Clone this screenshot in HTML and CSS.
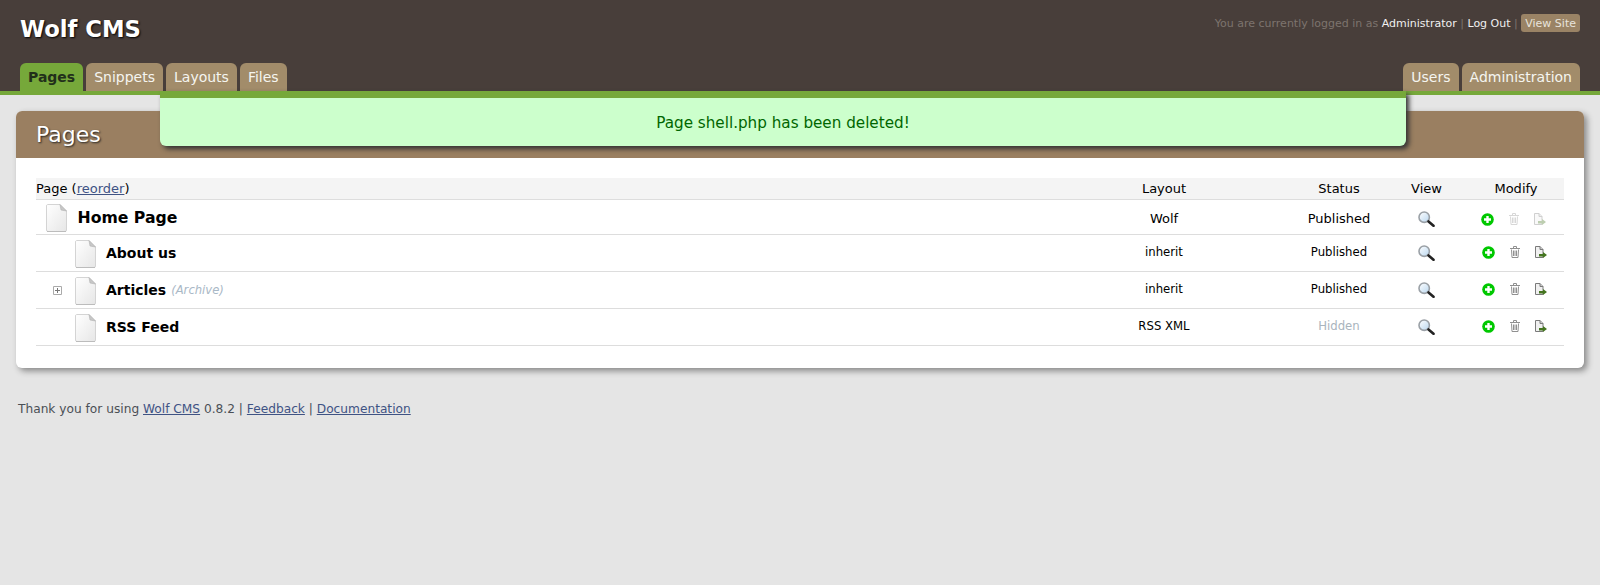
FILE: index.html
```html
<!DOCTYPE html>
<html lang="en">
<head>
  <meta charset="UTF-8">
  <title>Pages - Wolf CMS</title>
  <link rel="stylesheet" href="styles.css">
</head>
<body>
  <svg class="icon-defs" width="0" height="0">
    <defs>
      <linearGradient id="paper" x1="0" y1="0" x2="1" y2="1">
        <stop offset="0" stop-color="#ffffff"/>
        <stop offset="1" stop-color="#e6e6e6"/>
      </linearGradient>
      <linearGradient id="lens" x1="0" y1="0" x2="1" y2="1">
        <stop offset="0" stop-color="#ffffff"/>
        <stop offset="1" stop-color="#b9d7f0"/>
      </linearGradient>
    </defs>
    <symbol id="i-page" viewBox="0 0 22 28">
      <path d="M1.5 .5H14L20.5 7V26a1.5 1.5 0 0 1-1.5 1.5H2A1.5 1.5 0 0 1 .5 26V2A1.5 1.5 0 0 1 1.5 .5Z" fill="url(#paper)" stroke="#d4d4d4"/>
      <path d="M1 27.5H20" stroke="#bcbcbc"/>
      <path d="M14 .5L15 6L20.5 7Z" fill="#c8c8c8" stroke="#b0b0b0" stroke-width=".6"/>
    </symbol>
    <symbol id="i-add" viewBox="0 0 13 13">
      <circle cx="6.5" cy="6.5" r="6.3" fill="#00c800"/>
      <path d="M6.5 3V10M3 6.5H10" stroke="#fff" stroke-width="2.4"/>
    </symbol>
    <symbol id="i-trash" viewBox="0 0 12 12">
      <path d="M1 2.5H11M4.5 2.5V.5H7.5V2.5" fill="none" stroke="currentColor"/>
      <path d="M2.5 3.5L3 11.5H9L9.5 3.5M4.5 4.5V10M6 4.5V10M7.5 4.5V10" fill="none" stroke="currentColor"/>
    </symbol>
    <symbol id="i-move" viewBox="0 0 12 12">
      <path d="M.5 .5H5L8 3.5V11.5H.5Z" fill="#f0f0f0" stroke="#7a7a7a"/>
      <path d="M5 .5V3.5H8" fill="#ccc" stroke="#7a7a7a"/>
      <path d="M4 8H8V6L12 9L8 12V10.5H4Z" fill="#44751f"/>
    </symbol>
    <symbol id="i-view" viewBox="0 0 17 16">
      <circle cx="6.2" cy="6.2" r="5.2" fill="url(#lens)" stroke="#9aa0a6" stroke-width="1.6"/>
      <path d="M10.5 10.5L15.5 14.8" stroke="#222" stroke-width="2.6" stroke-linecap="round"/>
    </symbol>
    <symbol id="i-expand" viewBox="0 0 9 9">
      <path d="M.5 .5H8.5V8.5H.5Z" fill="none" stroke="#aaa"/>
      <path d="M2 4.5H7M4.5 2V7" stroke="#777"/>
    </symbol>
  </svg>

  <header class="site-header">
    <div class="header-top">
      <div class="logo">Wolf CMS</div>
      <div class="user-info">
        You are currently logged in as <a href="#">Administrator</a>
        <span class="sep">|</span> <a href="#">Log Out</a>
        <span class="sep">|</span> <a class="view-site" href="#">View Site</a>
      </div>
    </div>
    <nav class="tabs">
      <a class="tab current" href="#">Pages</a>
      <a class="tab" href="#">Snippets</a>
      <a class="tab" href="#">Layouts</a>
      <a class="tab" href="#">Files</a>
      <a class="tab push-right" href="#">Users</a>
      <a class="tab" href="#">Administration</a>
    </nav>
  </header>

  <div class="notice">Page shell.php has been deleted!</div>

  <main class="content">
    <h1 class="content-title">Pages</h1>
    <div class="content-body">
      <table class="page-list">
        <thead>
          <tr>
            <th class="col-page">Page (<a href="#">reorder</a>)</th>
            <th class="col-layout">Layout</th>
            <th class="col-status">Status</th>
            <th class="col-view">View</th>
            <th class="col-modify">Modify</th>
          </tr>
        </thead>
        <tbody>
          <tr class="row-home">
            <td>
              <div class="page-name">
                <svg class="ic-page"><use href="#i-page"/></svg>
                <strong>Home Page</strong>
              </div>
            </td>
            <td class="cell">Wolf</td>
            <td class="cell">Published</td>
            <td class="cell"><svg class="ic-view"><use href="#i-view"/></svg></td>
            <td>
              <div class="actions disabled-actions">
                <svg class="ic-small"><use href="#i-add"/></svg>
                <svg class="ic-small faded"><use href="#i-trash"/></svg>
                <svg class="ic-small faded"><use href="#i-move"/></svg>
              </div>
            </td>
          </tr>
          <tr>
            <td>
              <div class="page-name child">
                <svg class="ic-page"><use href="#i-page"/></svg>
                <strong>About us</strong>
              </div>
            </td>
            <td class="cell">inherit</td>
            <td class="cell">Published</td>
            <td class="cell"><svg class="ic-view"><use href="#i-view"/></svg></td>
            <td>
              <div class="actions">
                <svg class="ic-small"><use href="#i-add"/></svg>
                <svg class="ic-small"><use href="#i-trash"/></svg>
                <svg class="ic-small"><use href="#i-move"/></svg>
              </div>
            </td>
          </tr>
          <tr>
            <td>
              <div class="page-name child has-expand">
                <svg class="ic-expand"><use href="#i-expand"/></svg>
                <svg class="ic-page"><use href="#i-page"/></svg>
                <strong>Articles</strong>
                <em class="page-type">(Archive)</em>
              </div>
            </td>
            <td class="cell">inherit</td>
            <td class="cell">Published</td>
            <td class="cell"><svg class="ic-view"><use href="#i-view"/></svg></td>
            <td>
              <div class="actions">
                <svg class="ic-small"><use href="#i-add"/></svg>
                <svg class="ic-small"><use href="#i-trash"/></svg>
                <svg class="ic-small"><use href="#i-move"/></svg>
              </div>
            </td>
          </tr>
          <tr>
            <td>
              <div class="page-name child">
                <svg class="ic-page"><use href="#i-page"/></svg>
                <strong>RSS Feed</strong>
              </div>
            </td>
            <td class="cell">RSS XML</td>
            <td class="cell hidden-status">Hidden</td>
            <td class="cell"><svg class="ic-view"><use href="#i-view"/></svg></td>
            <td>
              <div class="actions">
                <svg class="ic-small"><use href="#i-add"/></svg>
                <svg class="ic-small"><use href="#i-trash"/></svg>
                <svg class="ic-small"><use href="#i-move"/></svg>
              </div>
            </td>
          </tr>
        </tbody>
      </table>
    </div>
  </main>

  <footer class="site-footer">
    Thank you for using <a href="#">Wolf CMS</a> 0.8.2 | <a href="#">Feedback</a> | <a href="#">Documentation</a>
  </footer>
</body>
</html>
```

FILE: styles.css
```css
body {
  margin: 0;
  background-color: #e5e5e5;
  font-family: "DejaVu Sans", sans-serif;
  font-size: 12px;
  color: #000;
}

.icon-defs {
  position: absolute;
}

/* header */
.site-header {
  height: 91px;
  background-color: #483e3a;
  border-bottom: 4px solid #76a83a;
  display: flex;
  flex-direction: column;
  justify-content: space-between;
  padding: 0 20px;
}

.header-top {
  display: flex;
  justify-content: space-between;
  align-items: flex-start;
}

.logo {
  margin-top: 15px;
  font-size: 22.7px;
  line-height: 29px;
  font-weight: bold;
  color: #fff;
  text-shadow: 1px 1px 2px #000;
}

.user-info {
  margin-top: 14px;
  font-size: 11px;
  line-height: 18px;
  color: #7d746e;
}

.user-info a {
  color: #f0f0f0;
  text-decoration: none;
}

.user-info .sep {
  color: #7d746e;
}

.user-info .view-site {
  display: inline-block;
  padding: 1px 4px 0;
  height: 17px;
  background-color: #9a8365;
  color: #e8e4dc;
  border-radius: 3px;
}

.tabs {
  display: flex;
  gap: 3px;
}

.tab {
  height: 28px;
  line-height: 28px;
  padding: 0 8px;
  background-color: #a28c6a;
  border-radius: 6px 6px 0 0;
  color: #f5f5f0;
  font-size: 14px;
  text-decoration: none;
}

.tab.current {
  background-color: #76a83a;
  color: #22301a;
  font-weight: bold;
}

.tab.push-right {
  margin-left: auto;
}

/* notice overlay */
.notice {
  position: absolute;
  left: 160px;
  top: 91px;
  width: 1246px;
  height: 48px;
  line-height: 50px;
  background-color: #cfc;
  border-top: 7px solid #76a83a;
  border-radius: 0 0 6px 6px;
  box-shadow: 3px 3px 5px #333;
  color: #060;
  font-size: 15.2px;
  text-align: center;
}

/* main box */
.content {
  margin: 16px 16px 0;
  border-radius: 6px;
  box-shadow: 3px 3px 6px #888;
  background-color: #fff;
}

.content-title {
  margin: 0;
  height: 47px;
  padding-left: 20px;
  background-color: #9a7f61;
  border-radius: 6px 6px 0 0;
  color: #fff;
  font-size: 22px;
  font-weight: normal;
  line-height: 47px;
  text-shadow: 1px 1px 2px #222;
}

.content-body {
  padding: 20px 20px 22px;
  border-radius: 0 0 6px 6px;
}

.page-list {
  width: 100%;
  border-collapse: collapse;
  table-layout: fixed;
}

.page-list th {
  height: 21px;
  padding: 0;
  background-color: #f4f4f4;
  border-bottom: 1px solid #ddd;
  font-size: 13px;
  font-weight: normal;
}

.page-list th a {
  color: #3f5384;
}

.page-list td {
  height: 36px;
  padding: 0;
  border-bottom: 1px solid #ddd;
  font-size: 11.7px;
}

.page-list .row-home td {
  height: 34px;
}

.col-page {
  text-align: left;
}

.col-layout {
  width: 258px;
}

.col-status {
  width: 92px;
}

.col-view {
  width: 83px;
}

.col-modify {
  width: 96px;
}

.page-list .cell {
  height: 34px;
  padding-bottom: 2px;
  text-align: center;
}

.page-list .row-home .cell {
  height: 32px;
  padding-top: 2px;
  padding-bottom: 0;
  font-size: 13px;
}

.page-list .hidden-status {
  color: #a9b4bd;
}

.page-name {
  display: flex;
  align-items: center;
  padding-left: 10px;
  font-size: 14px;
}

.row-home .page-name {
  font-size: 15.7px;
}

.page-name.child {
  padding-left: 39px;
}

.page-name.child.has-expand {
  padding-left: 17px;
}

.page-name strong {
  margin-left: 9px;
}

.row-home .page-name strong {
  margin-left: 9.5px;
}

.ic-page {
  width: 22px;
  height: 28px;
  margin-top: 2px;
  flex: none;
}

.ic-expand {
  width: 9px;
  height: 9px;
  margin-right: 13px;
  flex: none;
}

.page-type {
  margin-left: 5px;
  color: #a9b8c6;
  font-size: 11.6px;
}

.ic-view {
  width: 17px;
  height: 16px;
  margin-top: 2px;
  vertical-align: middle;
}

.actions {
  display: flex;
  gap: 14px;
  padding-left: 14px;
  padding-bottom: 2px;
  color: #909090;
}

.disabled-actions {
  padding-left: 13px;
  padding-top: 4px;
  padding-bottom: 0;
}

.ic-small {
  width: 12px;
  height: 12px;
  flex: none;
}

.ic-small:first-child {
  width: 13px;
  height: 13px;
}

.ic-small.faded {
  opacity: 0.35;
}

/* footer */
.site-footer {
  margin: 34px 18px 0;
  color: #4a4f55;
  font-size: 12.2px;
}

.site-footer a {
  color: #3f5384;
}
```
